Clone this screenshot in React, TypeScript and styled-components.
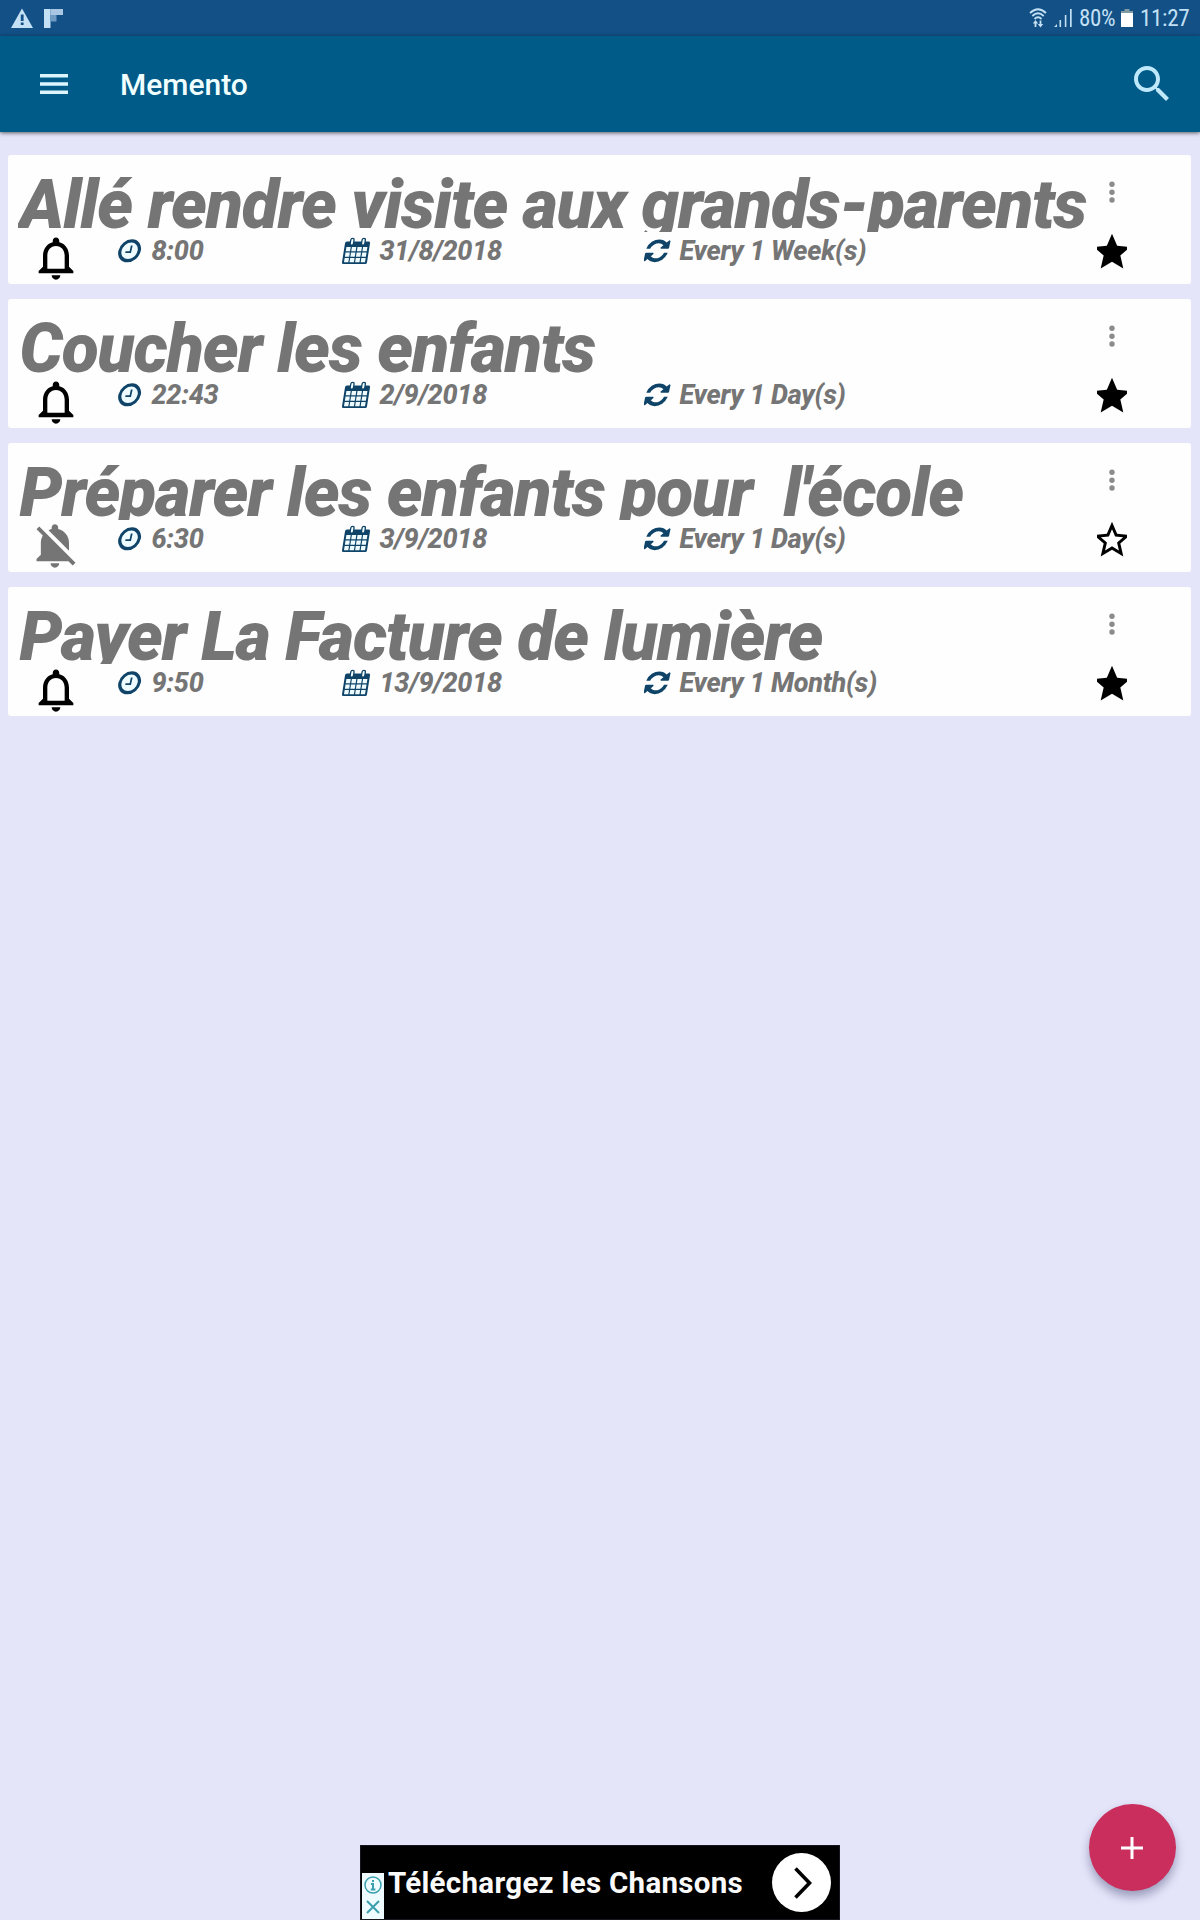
import React from "react";
import styled, { createGlobalStyle } from "styled-components";

const GlobalStyle = createGlobalStyle`
  * { box-sizing: border-box; }
  body { margin: 0; background: #e4e5f9; }
  button { border: 0; padding: 0; background: none; font: inherit; }
  svg { display: block; flex: none; }
`;

const Screen = styled.div`
  position: relative;
  display: flex;
  flex-direction: column;
  width: 1200px;
  height: 1920px;
  overflow: hidden;
  background: #e4e5f9;
  font-family: Roboto, "Liberation Sans", sans-serif;
`;

const StatusBar = styled.header`
  display: flex;
  align-items: center;
  justify-content: space-between;
  height: 36px;
  padding: 0 12px 0 11px;
  background: #135086;
  color: #c3e0f5;
`;

const StatusGroup = styled.div<{ $gap: number }>`
  display: flex;
  align-items: center;
  gap: ${(p) => p.$gap}px;
`;

const StatusText = styled.span<{ $width: number }>`
  width: ${(p) => p.$width}px;
  font-family: "Roboto Condensed", Roboto, sans-serif;
  font-stretch: 75%;
  font-size: 23px;
  line-height: 36px;
  padding-top: 2px;
  letter-spacing: -0.3px;
  white-space: nowrap;
`;

const Toolbar = styled.nav`
  display: flex;
  align-items: center;
  height: 96px;
  flex: none;
  padding: 0 24px 0 40px;
  background: #005b88;
  box-shadow: 0 1px 4px rgba(0, 0, 0, 0.6);
  color: #dcf6ff;
`;

const ToolbarTitle = styled.h1`
  flex: 1;
  margin: 2px 0 0 52px;
  font-size: 30px;
  font-weight: 500;
  line-height: 40px;
  color: #f0ffff;
`;

const IconButton = styled.button`
  display: flex;
  color: inherit;
`;

const CardList = styled.main`
  display: flex;
  flex-direction: column;
  gap: 15px;
  padding: 23px 9px 0 8px;
`;

const Card = styled.article`
  display: flex;
  height: 129px;
  padding-left: 10px;
  background: #fefefe;
  border-radius: 3px;
`;

const CardBody = styled.div`
  flex: 1;
  min-width: 0;
`;

const Title = styled.h2`
  height: 77px;
  margin: 0;
  padding-left: 1.5px;
  overflow: hidden;
  font-size: 68px;
  font-style: italic;
  font-weight: 900;
  letter-spacing: -1.15px;
  line-height: 100px;
  white-space: pre;
  color: #757575;
`;

const Details = styled.div`
  display: grid;
  grid-template-columns: 100px 224px 302px 1fr;
  height: 52px;
`;

const BellCell = styled.div`
  padding-left: 12px;
`;

const Detail = styled.div`
  display: flex;
  gap: 7.5px;
  height: 38px;
  align-items: center;
`;

const DetailText = styled.span`
  font-size: 27px;
  font-style: italic;
  font-weight: 800;
  letter-spacing: -0.25px;
  white-space: nowrap;
  color: #757575;
`;

const CardActions = styled.div`
  display: flex;
  flex-direction: column;
  align-items: center;
  width: 30px;
  margin-right: 64px;
  padding-top: 25px;
  gap: 26px;
`;

const StarClip = styled.button`
  display: flex;
  justify-content: center;
  width: 30px;
  height: 44px;
  overflow: hidden;
`;

const Fab = styled.button`
  position: absolute;
  right: 24px;
  bottom: 29px;
  display: grid;
  place-items: center;
  width: 87px;
  height: 87px;
  padding-right: 2px;
  border-radius: 50%;
  background: #c92e5c;
  box-shadow: 0 6px 10px rgba(40, 40, 90, 0.38);
`;

const AdBanner = styled.aside`
  display: flex;
  width: 480px;
  height: 75px;
  margin: auto auto 0;
  padding: 0 8px 0 1px;
  border: 1px solid #15171c;
  background: #000;
`;

const AdBadge = styled.div`
  display: flex;
  flex-direction: column;
  align-items: center;
  align-self: flex-end;
  gap: 6px;
  width: 22px;
  height: 46px;
  padding-top: 3px;
  background: #eefcff;
`;

const AdText = styled.span`
  flex: 1;
  padding: 1px 0 0 4px;
  font-size: 29.5px;
  font-weight: 700;
  letter-spacing: 0.3px;
  line-height: 73px;
  white-space: nowrap;
  color: #fafafa;
`;

const AdArrow = styled.div`
  display: grid;
  place-items: center;
  align-self: center;
  width: 59px;
  height: 59px;
  padding-left: 3px;
  border-radius: 50%;
  background: #fff;
`;

const NAVY = "#0f4468";

const ClockIcon = () => (
  <svg width="26" height="24" viewBox="0 0 26 24">
    <g transform="skewX(-12) translate(2.6 0.6)">
      <ellipse cx="11.5" cy="11.2" rx="9.6" ry="9.9" fill="#effcff" stroke={NAVY} strokeWidth="3.2" />
      <path d="M12.5 5.8V12.6H7.6" fill="none" stroke={NAVY} strokeWidth="1.8" />
    </g>
  </svg>
);

const CalendarIcon = () => (
  <svg width="30" height="28" viewBox="0 0 30 28">
    <g transform="skewX(-9) translate(4 0)">
      <path d="M0 6.2Q0 4.6 1.6 4.6H23.4Q25 4.6 25 6.2V25.4Q25 27 23.4 27H1.6Q0 27 0 25.4Z" fill={NAVY} />
      <path
        d="M2 10h4.300v4.300H2zM7.500 10h4.400v4.300H7.500zM13.100 10h4.400v4.300h-4.400zM18.700 10H23v4.300h-4.300zM2 15.500h4.300v4.300H2zM7.500 15.500h4.400v4.300H7.500zM13.100 15.500h4.400v4.300h-4.400zM18.700 15.500H23v4.300h-4.300zM2 21h4.300v4.300H2zM7.500 21h4.400v4.300H7.500zM13.100 21h4.400v4.300h-4.400zM18.700 21H23v4.300h-4.300z"
        fill="#effcff"
      />
      <rect x="4.6" y="0.8" width="4.6" height="8" rx="2.2" fill={NAVY} />
      <rect x="15.9" y="0.8" width="4.6" height="8" rx="2.2" fill={NAVY} />
      <rect x="5.9" y="2" width="2" height="5.6" rx="1" fill="#effcff" />
      <rect x="17.2" y="2" width="2" height="5.6" rx="1" fill="#effcff" />
    </g>
  </svg>
);

const RepeatIcon = () => (
  <svg width="28" height="24" viewBox="0 0 28 24">
    <g transform="skewX(-12) translate(4.2 0.4) scale(0.0148)" fill={NAVY}>
      <path d="M1511 928q0 5-1 7-64 268-268 434.500t-478 166.500q-146 0-282.500-55t-243.500-157l-129 129q-19 19-45 19t-45-19-19-45v-448q0-26 19-45t45-19h448q26 0 45 19t19 45-19 45l-137 137q71 66 161 102t187 36q134 0 250-65t186-179q11-17 53-117 8-23 30-23h192q13 0 22.500 9.500t9.500 22.500zm25-800v448q0 26-19 45t-45 19h-448q-26 0-45-19t-19-45 19-45l138-138q-148-137-349-137-134 0-250 65t-186 179q-11 17-53 117-8 23-30 23h-199q-13 0-22.500-9.500t-9.500-22.500v-7q65-268 270-434.500t480-166.500q146 0 284 55.500t245 156.500l130-129q19-19 45-19t45 19 19 45z" />
    </g>
  </svg>
);

const BellIcon = ({ muted }: { muted?: boolean }) => (
  <svg width="52" height="52" viewBox="0 0 24 24" fill={muted ? "#757575" : "#000"}>
    {muted ? (
      <path d="M11.500 22c1.100 0 2-.9 2-2h-4c0 1.100.9 2 2 2zM18 10.500c0-3.070-2.130-5.640-5-6.320V3.500c0-.83-.67-1.500-1.500-1.500S10 2.670 10 3.500v.68c-.51.12-.99.32-1.450.56L18 14.180V10.500zm-.27 8.500l2 2L21 19.730 4.270 3 3 4.270l2.920 2.920C5.340 8.160 5 9.290 5 10.500V16l-2 2v1h14.730z" />
    ) : (
      <path d="M12 22c1.100 0 2-.9 2-2h-4c0 1.100.9 2 2 2zm6-6v-5c0-3.070-1.630-5.640-4.500-6.320V4c0-.83-.67-1.500-1.500-1.500s-1.500.67-1.500 1.500v.68C7.640 5.360 6 7.920 6 11v5l-2 2v1h16v-1l-2-2zm-2 1H8v-6c0-2.480 1.510-4.500 4-4.500s4 2.020 4 4.500v6z" />
    )}
  </svg>
);

const StarIcon = ({ filled }: { filled: boolean }) => (
  <svg width="44" height="44" viewBox="0 0 24 24">
    {filled ? (
      <path d="M12 17.270L18.180 21l-1.640-7.030L22 9.240l-7.190-.61L12 2 9.190 8.630 2 9.240l5.460 4.730L5.820 21z" />
    ) : (
      <path d="M22 9.240l-7.190-.62L12 2 9.190 8.630 2 9.240l5.460 4.730L5.820 21 12 17.270 18.180 21l-1.630-7.030L22 9.240zM12 15.400l-3.760 2.270 1-4.280-3.320-2.880 4.380-.38L12 6.100l1.710 4.040 4.380.38-3.320 2.880 1 4.280L12 15.400z" />
    )}
  </svg>
);

const DotsIcon = () => (
  <svg width="8" height="24" viewBox="0 0 8 24" fill="#8b8b8b">
    <circle cx="4" cy="4.3" r="2.7" />
    <circle cx="4" cy="12.2" r="2.7" />
    <circle cx="4" cy="20" r="2.7" />
  </svg>
);

type Reminder = {
  title: string;
  time: string;
  date: string;
  repeat: string;
  active: boolean;
};

const reminders: Reminder[] = [
  { title: "Allé rendre visite aux grands-parents", time: "8:00", date: "31/8/2018", repeat: "Every 1 Week(s)", active: true },
  { title: "Coucher les enfants", time: "22:43", date: "2/9/2018", repeat: "Every 1 Day(s)", active: true },
  { title: "Préparer les enfants pour  l'école", time: "6:30", date: "3/9/2018", repeat: "Every 1 Day(s)", active: false },
  { title: "Payer La Facture de lumière", time: "9:50", date: "13/9/2018", repeat: "Every 1 Month(s)", active: true },
];

const ReminderCard = ({ title, time, date, repeat, active }: Reminder) => (
  <Card>
    <CardBody>
      <Title>{title}</Title>
      <Details>
        <BellCell>
          <BellIcon muted={!active} />
        </BellCell>
        <Detail>
          <ClockIcon />
          <DetailText>{time}</DetailText>
        </Detail>
        <Detail>
          <CalendarIcon />
          <DetailText>{date}</DetailText>
        </Detail>
        <Detail>
          <RepeatIcon />
          <DetailText>{repeat}</DetailText>
        </Detail>
      </Details>
    </CardBody>
    <CardActions>
      <DotsIcon />
      <StarClip aria-label="Favorite">
        <StarIcon filled={active} />
      </StarClip>
    </CardActions>
  </Card>
);

export default function App() {
  return (
    <Screen>
      <GlobalStyle />
      <StatusBar>
        <StatusGroup $gap={11}>
          <svg width="22" height="20" viewBox="0 0 22 20">
            <path d="M11 .5L22 20H0z" fill="currentColor" />
            <path d="M9.800 6.500h2.800v6.500H9.800zm0 8h2.800V17H9.800z" fill="#135086" />
          </svg>
          <svg width="19" height="19" viewBox="0 0 19 19">
            <path d="M0 0h6.500v19H0z" fill="#c3e0f5" />
            <path d="M6.500 0H19v6H6.500z" fill="#a9c6e2" />
            <path d="M6.500 6H12.500v6.500H6.500z" fill="#6f9ac4" />
          </svg>
        </StatusGroup>
        <StatusGroup $gap={7}>
          <svg width="18" height="20" viewBox="0 0 18 20" fill="none" stroke="currentColor" strokeWidth="1.8">
            <path d="M1 5Q9-2.600 17 5M3.300 8Q9 2.600 14.700 8M5.500 11Q9 7.600 12.500 11" />
            <path d="M6.500 19v-4.500M11.500 12.500V17" />
            <path d="M3.800 15.500L6.500 12l2.700 3.500zM8.800 16L11.500 19.500 14.200 16z" fill="currentColor" stroke="none" />
          </svg>
          <svg width="18" height="20" viewBox="0 0 18 20" fill="currentColor">
            <path d="M0 19l3-3v3zM5.500 12h1.600v7H5.500zM10.800 7h1.600v12h-1.600zM16 1h1.700v18H16z" />
          </svg>
          <StatusText $width={35}>80%</StatusText>
          <svg width="12" height="18" viewBox="0 0 12 18">
            <path d="M3.500 0h5v2H12v3H0V2h3.500z" fill="#7f9ca5" />
            <path d="M0 4h12v14H0z" fill="#fff" />
          </svg>
          <StatusText $width={48}>11:27</StatusText>
        </StatusGroup>
      </StatusBar>
      <Toolbar>
        <IconButton aria-label="Menu">
          <svg width="28" height="21" viewBox="0 0 28 21" fill="currentColor">
            <path d="M0 0h28v3.500H0zM0 8.200h28v3.500H0zM0 16.500h28V20H0z" />
          </svg>
        </IconButton>
        <ToolbarTitle>Memento</ToolbarTitle>
        <IconButton aria-label="Search">
          <svg width="48" height="48" viewBox="0 0 24 24" fill="#bfe9fb">
            <path d="M15.500 14h-.79l-.28-.27C15.410 12.590 16 11.110 16 9.500 16 5.910 13.090 3 9.500 3S3 5.910 3 9.500 5.910 16 9.500 16c1.610 0 3.090-.59 4.230-1.570l.27.28v.79l5 4.990L20.490 19l-4.990-5zm-6 0C7.010 14 5 11.990 5 9.500S7.010 5 9.500 5 14 7.010 14 9.500 11.990 14 9.500 14z" />
          </svg>
        </IconButton>
      </Toolbar>
      <CardList>
        {reminders.map((r) => (
          <ReminderCard key={r.title} {...r} />
        ))}
      </CardList>
      <AdBanner>
        <AdBadge>
          <svg width="18" height="18" viewBox="0 0 18 18" fill="none" stroke="#3a9fae">
            <circle cx="9" cy="9" r="8" strokeWidth="1.5" />
            <path d="M9 4v2M7 8h2v5.500M6.800 13.500h4.600" strokeWidth="2" />
          </svg>
          <svg width="14" height="14" viewBox="0 0 14 14" stroke="#3a9fae" strokeWidth="2">
            <path d="M1 1l12 12M13 1L1 13" />
          </svg>
        </AdBadge>
        <AdText>Téléchargez les Chansons</AdText>
        <AdArrow>
          <svg width="18" height="32" viewBox="0 0 18 32" fill="none" stroke="#000" strokeWidth="3.6">
            <path d="M1.500 1.500L15.500 16 1.500 30.500" />
          </svg>
        </AdArrow>
      </AdBanner>
      <Fab aria-label="Add">
        <svg width="22" height="22" viewBox="0 0 22 22" fill="#fff">
          <path d="M9.500 0h3v9.500H22v3h-9.500V22h-3v-9.500H0v-3h9.500z" />
        </svg>
      </Fab>
    </Screen>
  );
}
